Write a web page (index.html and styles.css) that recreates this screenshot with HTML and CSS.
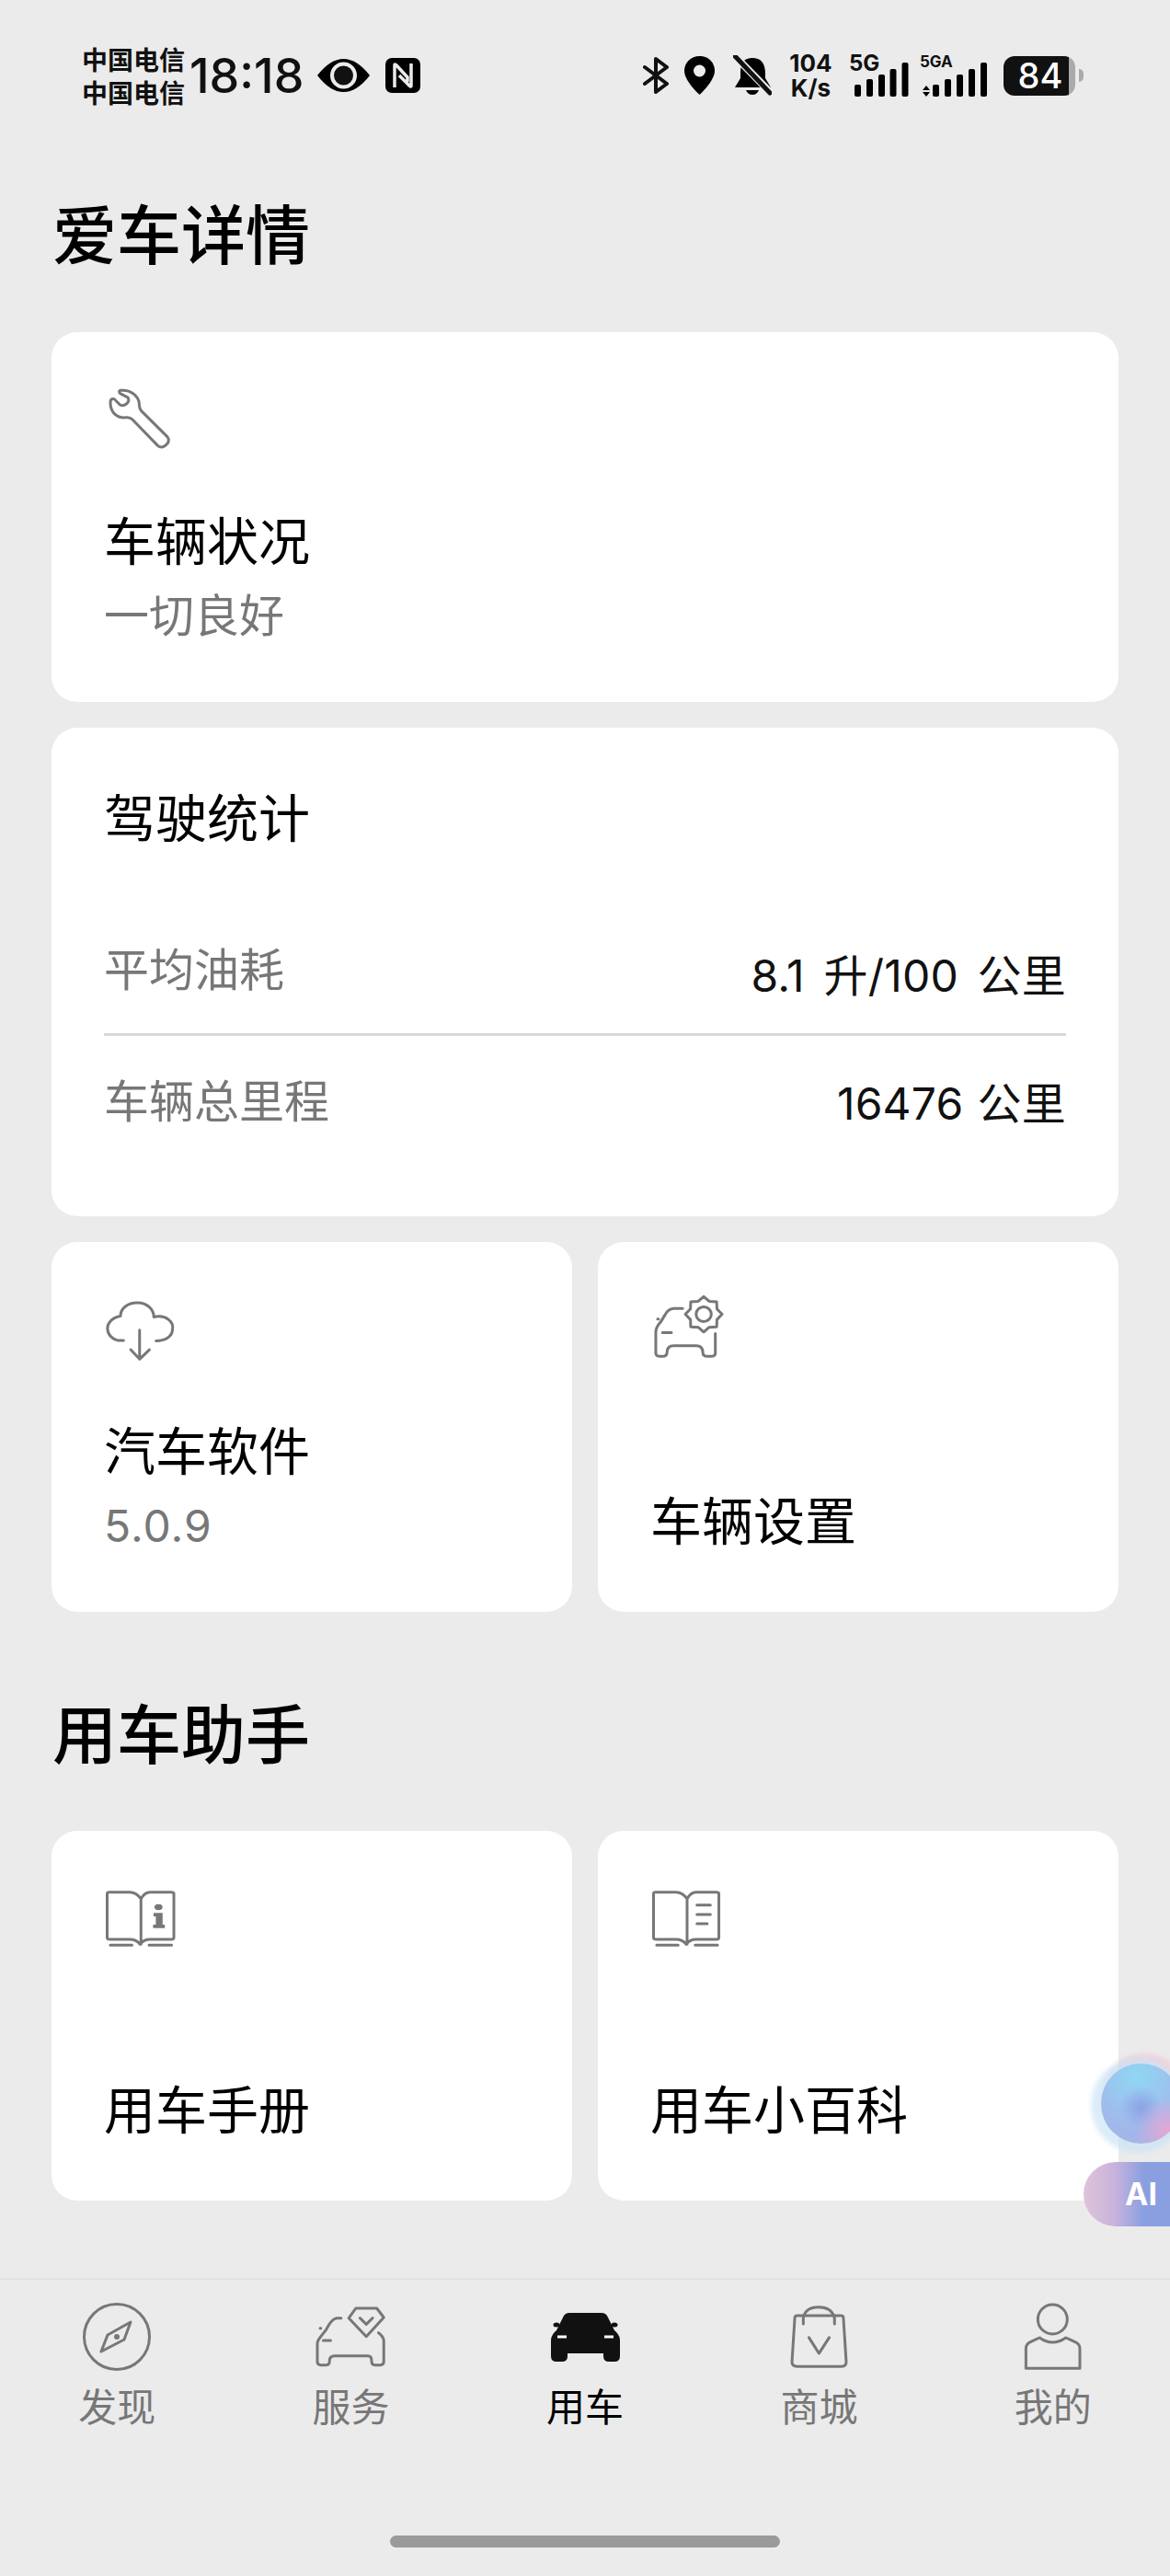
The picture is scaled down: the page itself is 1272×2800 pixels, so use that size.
FILE: index.html
```html
<!DOCTYPE html>
<html lang="zh-CN">
<head>
    <meta charset="UTF-8">
    <meta name="viewport" content="width=device-width, initial-scale=1.0">
    <title>爱车详情</title>
    <link rel="stylesheet" href="styles.css">
</head>
<body>
    <!-- Status bar -->
    <div class="status">
        <div class="status-left">
            <div class="carrier">中国电信<br>中国电信</div>
            <div class="time">18:18</div>
            <svg class="st-eye" width="57" height="36" viewBox="0 0 57 36">
                <path d="M0 18Q14 0 28.5 0T57 18Q43 36 28.5 36T0 18Z"/>
                <circle class="ring" cx="28.5" cy="18" r="12.5"/>
            </svg>
            <svg class="st-nfc" width="38" height="38" viewBox="0 0 38 38">
                <rect width="38" height="38" rx="7"/>
                <path class="nfc-n" d="M10 32V8Q10 6 12 8L24 21V26M28 6V30Q28 32 26 30L15 19"/>
            </svg>
        </div>
        <div class="status-right">
            <svg class="st-bt" width="29" height="40" viewBox="0 0 29 40">
                <path d="M2 11L26 29L14 38V2L26 11L2 29"/>
            </svg>
            <svg class="st-loc" width="33" height="42" viewBox="0 0 33 42">
                <path d="M16.5 0C7 0 0 7 0 16C0 27 16.5 42 16.5 42S33 27 33 16C33 7 26 0 16.5 0Z"/>
                <circle class="hole" cx="16.5" cy="16" r="6.5"/>
            </svg>
            <svg class="st-bell" width="42" height="44" viewBox="0 0 42 44">
                <path d="M21 3Q34 3 35 18V25L41 35H2L8 25V18Q8 3 21 3Z"/>
                <path d="M14 38H28Q26 43 21 43T14 38Z"/>
                <path class="slash-bg" d="M2 1L41 41"/>
                <path class="slash" d="M2 1L40 41"/>
            </svg>
            <div class="speed">104<br>K/s</div>
            <div class="sig sig-5g">
                <span class="sig-label">5G</span>
                <svg width="59" height="37" viewBox="0 0 59 37">
                    <rect x="0" y="24" width="7" height="13" rx="2"/>
                    <rect x="13" y="18" width="7" height="19" rx="2"/>
                    <rect x="26" y="13" width="7" height="24" rx="2"/>
                    <rect x="38.500" y="7" width="7" height="30" rx="2"/>
                    <rect x="51.500" y="0" width="7" height="37" rx="2"/>
                </svg>
            </div>
            <div class="sig sig-5ga">
                <span class="sig-label">5GA</span>
                <svg width="73" height="37" viewBox="0 0 73 37">
                    <path d="M3 30H11L7 25ZM3 32H11L7 37Z"/>
                    <rect x="14" y="24" width="7" height="13" rx="2"/>
                    <rect x="27" y="18" width="7" height="19" rx="2"/>
                    <rect x="40" y="13" width="7" height="24" rx="2"/>
                    <rect x="53" y="7" width="7" height="30" rx="2"/>
                    <rect x="66" y="0" width="7" height="37" rx="2"/>
                </svg>
            </div>
            <div class="battery">
                <div class="batt-body">84</div>
                <div class="batt-nub"></div>
            </div>
        </div>
    </div>

    <h2 class="section-title first">爱车详情</h2>

    <div class="cards">
        <div class="card tile">
            <svg class="ic ic-wrench" width="66" height="65" viewBox="237 218 200 198" preserveAspectRatio="none">
                <path d="M272 222C305 218 335 240 335 268Q335 282 342 290L428 376Q436 386 428 398L418 407Q406 414 396 405L312 318Q304 310 290 312C262 314 240 296 240 262Q240 250 250 250Q254 250 258 256L272 270Q282 276 294 266Q304 256 298 246L272 232Q266 224 272 222Z"/>
            </svg>
            <div class="tile-text">
                <div class="tile-name">车辆状况</div>
                <div class="tile-sub">一切良好</div>
            </div>
        </div>

        <div class="card stats">
            <div class="tile-name stats-title">驾驶统计</div>
            <div class="stat-row stat-first">
                <span class="stat-label">平均油耗</span>
                <span class="stat-value">8.1 升/100 公里</span>
            </div>
            <div class="stat-row">
                <span class="stat-label">车辆总里程</span>
                <span class="stat-value">16476 公里</span>
            </div>
        </div>

        <div class="card-row">
            <div class="card tile">
                <svg class="ic ic-cloud" width="74" height="64" viewBox="72 105 153 193" preserveAspectRatio="none">
                    <path d="M112 232H100C72 225 62 165 105 152C105 125 122 108 143 108C165 108 180 130 180 155C208 145 225 172 222 195C222 220 205 233 185 233"/>
                    <path d="M148 198V293M128 262L148 293L170 262"/>
                </svg>
                <div class="tile-text">
                    <div class="tile-name">汽车软件</div>
                    <div class="tile-sub version">5.0.9</div>
                </div>
            </div>
            <div class="card tile">
                <svg class="ic ic-gear" width="73" height="66" viewBox="1303 88 150 199" preserveAspectRatio="none">
                    <polygon points="1453,147 1441.6,164.6 1441,188 1424.2,189.500 1412,205 1399.8,189.500 1383,188 1382.4,164.6 1371,147 1382.4,129.4 1383,106 1399.8,104.500 1412,89 1424.2,104.500 1441,106 1441.6,129.4"/>
                    <ellipse cx="1412" cy="147" rx="17" ry="24"/>
                    <path d="M1365 128H1345Q1332 130 1326 148L1316 172Q1305 190 1305 205V275Q1305 285 1315 285H1320Q1330 285 1330 272Q1330 250 1345 250H1395Q1410 250 1410 272Q1410 285 1420 285H1428Q1438 285 1438 275V210"/>
                    <path d="M1309 163H1311M1320 207H1340"/>
                </svg>
                <div class="tile-text">
                    <div class="tile-name">车辆设置</div>
                </div>
            </div>
        </div>
    </div>

    <h2 class="section-title second">用车助手</h2>

    <div class="card-row helpers">
        <div class="card tile">
            <svg class="ic ic-book" width="74" height="60" viewBox="74 78 151 180" preserveAspectRatio="none">
                <path d="M150 102Q140 80 125 80H80Q75 80 75 85V228Q75 234 82 234H125Q140 234 148 250Q156 234 170 234H217Q223 234 223 228V85Q223 80 217 80H170Q158 80 150 102V250"/>
                <path d="M82 253H130M168 253H218"/>
                <path class="ic-solid" d="M189 119A9 10 0 1 1 188.900 119ZM178 148H198V186H203V197H177V186H183V159H178Z"/>
            </svg>
            <div class="tile-text">
                <div class="tile-name">用车手册</div>
            </div>
        </div>
        <div class="card tile">
            <svg class="ic ic-book" width="73" height="60" viewBox="1300 78 150 180" preserveAspectRatio="none">
                <path d="M1376 102Q1366 80 1351 80H1306Q1301 80 1301 85V228Q1301 234 1308 234H1351Q1366 234 1374 250Q1382 234 1396 234H1441Q1447 234 1447 228V85Q1447 80 1441 80H1396Q1384 80 1376 102V250"/>
                <path d="M1308 253H1356M1394 253H1444M1398 122H1428M1398 153H1428M1398 183H1421"/>
            </svg>
            <div class="tile-text">
                <div class="tile-name">用车小百科</div>
            </div>
        </div>
    </div>

    <!-- Floating AI assistant -->
    <div class="ai-orb"></div>
    <div class="ai-pill">AI</div>

    <!-- Bottom navigation -->
    <div class="tabbar">
        <div class="tabs">
            <div class="tab">
                <div class="tab-icon">
                    <svg class="ic" width="74" height="74" viewBox="0 0 74 74">
                        <circle cx="37" cy="37" r="35.500"/>
                        <path d="M52 21L45 40L20 53L27 35Z"/>
                        <circle class="ic-solid" cx="37" cy="37" r="3"/>
                    </svg>
                </div>
                <div class="tab-label">发现</div>
            </div>
            <div class="tab">
                <div class="tab-icon">
                    <svg class="ic" width="73" height="64" viewBox="770 137 192 192" preserveAspectRatio="none">
                        <path d="M880 140H940L960 170L910 232L860 172Z"/>
                        <path d="M892 172L910 192L928 172"/>
                        <path d="M838 172H825Q810 175 795 210L780 232Q770 245 770 255V315Q770 325 780 325H795Q805 325 805 310Q805 295 820 295H915Q925 295 925 310Q925 325 935 325H950Q960 325 960 315V245Q958 230 945 220"/>
                        <path d="M778 205H780M787 245H808"/>
                    </svg>
                </div>
                <div class="tab-label">服务</div>
            </div>
            <div class="tab active">
                <div class="tab-icon">
                    <svg class="car-on" width="75" height="53" viewBox="0 0 75 53">
                        <path d="M20 0H55Q60 0 62 5L69 19Q75 24 75 30V47Q75 53 69 53H63Q57 53 57 47V44H18V47Q18 53 12 53H6Q0 53 0 47V30Q0 24 6 19L13 5Q15 0 20 0Z"/>
                        <ellipse cx="6" cy="13" rx="3.500" ry="2.500"/>
                        <ellipse cx="69" cy="13" rx="3.500" ry="2.500"/>
                        <path class="car-light" d="M7 26H17M58 26H68"/>
                    </svg>
                </div>
                <div class="tab-label">用车</div>
            </div>
            <div class="tab">
                <div class="tab-icon">
                    <svg class="ic" width="59" height="66" viewBox="630 138 153 199" preserveAspectRatio="none">
                        <path d="M645 168H768Q775 168 775 175L783 320Q783 335 770 335H645Q630 335 630 320L638 175Q638 168 645 168Z"/>
                        <path d="M662 195V175Q668 140 705 140Q742 140 750 175V195"/>
                        <path d="M678 240L706 292L735 240"/>
                    </svg>
                </div>
                <div class="tab-label">商城</div>
            </div>
            <div class="tab">
                <div class="tab-icon">
                    <svg class="ic" width="59" height="70" viewBox="1295 127 155 210" preserveAspectRatio="none">
                        <ellipse cx="1372" cy="175" rx="42" ry="48"/>
                        <path d="M1296 335V270Q1296 255 1310 248L1335 235Q1372 265 1410 235L1435 248Q1450 255 1450 270V335Z"/>
                    </svg>
                </div>
                <div class="tab-label">我的</div>
            </div>
        </div>
        <div class="home-bar"></div>
    </div>
</body>
</html>
```

FILE: styles.css
```css
body {
    margin: 0;
    width: 1272px;
    height: 2800px;
    position: relative;
    overflow: hidden;
    background-color: #ebebeb;
    color: #000;
    font-family: Inter, "Noto Sans CJK SC", sans-serif;
}

/* status bar */
.status {
    height: 160px;
    box-sizing: border-box;
    padding: 50px 94px 0 89px;
    display: flex;
    justify-content: space-between;
    align-items: flex-start;
}
.status-left, .status-right {
    height: 64px;
    display: flex;
    align-items: center;
}
.status svg {
    display: block;
}
.carrier {
    font-family: "Noto Sans CJK SC", sans-serif;
    font-size: 28px;
    line-height: 36px;
    font-weight: 700;
    color: #111;
    white-space: nowrap;
}
.time {
    margin-left: 5px;
    font-size: 52px;
    font-weight: 500;
    color: #111;
}
.st-eye { margin-left: 15px; }
.st-nfc { margin-left: 17px; }
.ring {
    fill: #111;
    stroke: #ebebeb;
    stroke-width: 4;
}
.nfc-n {
    fill: none;
    stroke: #ebebeb;
    stroke-width: 3.5;
}
.st-bt path {
    fill: none;
    stroke: #111;
    stroke-width: 4;
    stroke-linejoin: round;
    stroke-linecap: round;
}
.st-loc { margin-left: 16px; }
.hole { fill: #ebebeb; }
.st-bell { margin-left: 20px; }
.slash-bg {
    stroke: #ebebeb;
    stroke-width: 8;
}
.slash {
    stroke: #111;
    stroke-width: 5;
    stroke-linecap: round;
}
.speed {
    margin-left: 19px;
    width: 47px;
    font-size: 26px;
    line-height: 27px;
    font-weight: 700;
    text-align: center;
    color: #111;
    white-space: nowrap;
}
.sig {
    position: relative;
    height: 45px;
    color: #111;
}
.sig svg {
    position: absolute;
    right: 0;
    bottom: 0;
}
.sig-label {
    position: absolute;
    left: 0;
    top: -3px;
    font-weight: 700;
}
.sig-5g {
    width: 65px;
    margin-left: 18px;
}
.sig-5g .sig-label {
    font-size: 24px;
    line-height: 24px;
}
.sig-5ga {
    width: 73px;
    margin-left: 12px;
}
.sig-5ga .sig-label {
    font-size: 17px;
    line-height: 20px;
}
.battery {
    margin-left: 18px;
    display: flex;
    align-items: center;
}
.batt-body {
    width: 78px;
    height: 43px;
    border-radius: 12px;
    box-sizing: border-box;
    padding-left: 2px;
    background: linear-gradient(to right, #111 0, #111 71px, #aaa 71px);
    color: #fff;
    font-size: 38px;
    font-weight: 500;
    line-height: 43px;
    text-align: center;
}
.batt-nub {
    width: 5px;
    height: 14px;
    margin-left: 4px;
    background-color: #aaa;
    border-radius: 0 7px 7px 0;
}

/* headings */
.section-title {
    margin: 0;
    padding-left: 57px;
    font-size: 70px;
    line-height: 70px;
    font-weight: 500;
}
.section-title.first {
    margin-top: 62px;
    margin-bottom: 69px;
}
.section-title.second {
    margin-top: 100px;
    margin-bottom: 68px;
}

/* cards */
.cards {
    padding: 0 56px;
    display: flex;
    flex-direction: column;
    gap: 28px;
}
.card-row {
    display: grid;
    grid-template-columns: 1fr 1fr;
    gap: 28px;
}
.helpers {
    padding: 0 56px;
}
.card {
    background-color: #fff;
    border-radius: 28px;
    box-sizing: border-box;
}
.tile {
    height: 402px;
    padding: 59px 57px 63px;
    display: flex;
    flex-direction: column;
}
.tile-text {
    margin-top: auto;
}
.tile-name {
    font-size: 56px;
    line-height: 70px;
}
.tile-sub {
    margin-top: 16px;
    font-size: 49px;
    line-height: 60px;
    color: #777;
}
.version {
    font-size: 48px;
    letter-spacing: 1px;
}

.stats {
    height: 531px;
    padding: 64px 57px 56px;
}
.stats-title {
    margin-bottom: 61px;
}
.stat-row {
    height: 140px;
    display: flex;
    justify-content: space-between;
    align-items: center;
}
.stat-first {
    height: 140px;
    box-sizing: content-box;
    border-bottom: 3px solid #d8d8d8;
    margin-top: -3px;
}
.stat-label {
    padding-bottom: 6px;
    font-size: 49px;
    color: #777;
}
.stat-value {
    font-size: 48px;
    color: #111;
    letter-spacing: 0.2px;
    word-spacing: 1.5px;
}
.stat-first .stat-value {
    padding-top: 7px;
    word-spacing: 7px;
}

/* outline icons */
.ic {
    display: block;
    fill: none;
    stroke: #777;
    stroke-width: 3;
    stroke-linecap: round;
    stroke-linejoin: round;
    overflow: visible;
}
.ic * {
    vector-effect: non-scaling-stroke;
}
.ic .ic-solid {
    fill: #777;
    stroke: none;
}
.ic-wrench { margin: 3px 0 0 6px; }
.ic-cloud { margin: 6px 0 0 2px; }
.ic-gear { margin: 0 0 0 5px; }
.ic-book { margin: 7px 0 0 3px; }

/* floating AI */
.ai-orb {
    position: absolute;
    left: 1197px;
    top: 2243px;
    width: 87px;
    height: 87px;
    border-radius: 50%;
    background:
        radial-gradient(circle at 85% 85%, #e8a6d4 0, rgba(232, 166, 212, 0) 35%),
        radial-gradient(circle at 50% 55%, #8ea2e4 0, rgba(142, 162, 228, 0) 35%),
        radial-gradient(circle at 45% 15%, #90d6f4 0, rgba(144, 214, 244, 0) 70%),
        #a3b6ea;
    box-shadow: -3px 2px 5px 8px rgba(200, 228, 246, 0.65), 4px -8px 5px 3px rgba(240, 180, 200, 0.4);
}
.ai-pill {
    position: absolute;
    left: 1178px;
    top: 2350px;
    width: 94px;
    height: 70px;
    box-sizing: border-box;
    padding-left: 45px;
    border-radius: 35px 0 0 35px;
    background: linear-gradient(to right, #dec3d9 0, #c9b4dc 35%, #8a9fe0 70%);
    color: #fff;
    font-size: 34px;
    font-weight: 700;
    line-height: 70px;
}

/* bottom navigation */
.tabbar {
    margin-top: 84px;
    border-top: 2px solid #e2e2e2;
}
.tabs {
    display: grid;
    grid-template-columns: repeat(5, 1fr);
    padding-top: 22px;
}
.tab {
    display: flex;
    flex-direction: column;
    align-items: center;
    color: #777;
}
.tab.active {
    color: #000;
}
.tab-icon {
    height: 80px;
    display: flex;
    align-items: center;
    justify-content: center;
}
.tab-label {
    margin-top: 13px;
    font-size: 42px;
    line-height: 48px;
}
.car-on {
    margin-left: 2px;
    fill: #111;
}
.car-light {
    stroke: #fff;
    stroke-width: 3;
}
.home-bar {
    width: 424px;
    height: 13px;
    margin: 115px auto 0;
    background-color: #9a9a9a;
    border-radius: 7px;
}
```
